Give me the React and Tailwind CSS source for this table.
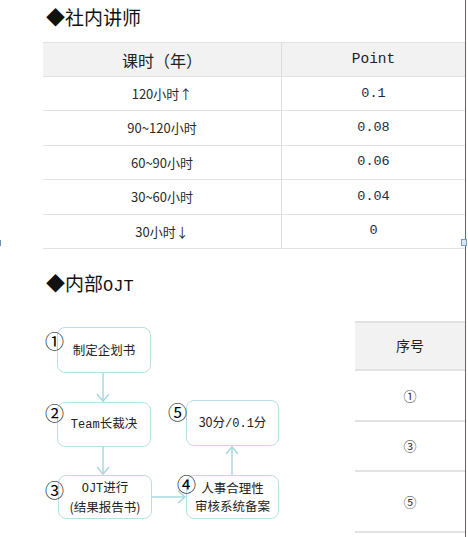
import React from "react";

const sans = { fontFamily: '"Noto Sans CJK SC", "Noto Sans", sans-serif' };
const mono = { fontFamily: '"Liberation Mono", monospace' };

const rows = [
  ["120小时↑", "0.1"],
  ["90~120小时", "0.08"],
  ["60~90小时", "0.06"],
  ["30~60小时", "0.04"],
  ["30小时↓", "0"],
];

function Node({ className, children }) {
  return (
    <div
      className={`absolute flex flex-col items-center justify-center rounded-[8px] border-[1.5px] border-[#b7dfe5] bg-white text-[12.5px] leading-[18px] text-[#222] ${className}`}
    >
      {children}
    </div>
  );
}

function Num({ className, children }) {
  return (
    <div className={`absolute text-[19px] leading-[19px] text-black ${className}`}>{children}</div>
  );
}

export default function App() {
  return (
    <div
      className="relative h-[537px] w-[468px] overflow-hidden bg-white text-[#222]"
      style={sans}
    >
      {/* Section 1 */}
      <div className="pl-[46px] pt-[5px] text-[19px] leading-[24px] text-[#111]">◆社内讲师</div>
      <div className="ml-[43px] mt-[13px] w-[422px]">
        <div className="flex h-[35px] border-y border-[#e2e2e2] bg-[#f2f2f2]">
          <div className="flex w-[239px] items-center justify-center border-r border-[#dedede] text-[16px] text-[#222]">
            课时（年）
          </div>
          <div className="flex flex-1 items-center justify-center text-[14.5px] text-[#222]" style={mono}>
            Point
          </div>
        </div>
        {rows.map(([a, b]) => (
          <div key={a} className="flex h-[34.4px] border-b border-[#e2e2e2]">
            <div className="flex w-[239px] items-center justify-center border-r border-[#dedede] text-[13px] text-[#2a2a2a]">
              {a}
            </div>
            <div className="flex flex-1 items-center justify-center text-[13.5px] text-[#1d2a47]" style={mono}>
              {b}
            </div>
          </div>
        ))}
      </div>

      {/* Section 2 */}
      <div className="mt-[22px] flex items-baseline pl-[46px] text-[19px] leading-[24px] text-[#111]">
        ◆内部<span style={mono} className="text-[17px]">OJT</span>
      </div>

      <div className="flex h-[242px]">
        {/* Flowchart canvas */}
        <div className="relative h-[242px] w-[355px]">
          <svg className="absolute left-0 top-0" width="355" height="242" fill="none" stroke="#a9d8df" strokeWidth="1.5">
            <path d="M103 74 V102" />
            <path d="M97 95 L103 102 L109 95" />
            <path d="M103 148 V175" />
            <path d="M97 168 L103 175 L109 168" />
            <path d="M152 198 H185" />
            <path d="M178 192 L185 198 L178 204" />
            <path d="M232 176 V148" />
            <path d="M226 155 L232 148 L238 155" />
          </svg>

          <Node className="left-[57px] top-[28px] h-[46px] w-[94px]">制定企划书</Node>
          <Node className="left-[57px] top-[103px] h-[45px] w-[94px]">
            <span>
              <span style={mono} className="text-[12px]">Team</span>长裁决
            </span>
          </Node>
          <Node className="left-[58px] top-[176px] h-[44px] w-[94px]">
            <span>
              <span style={mono} className="text-[12px]">OJT</span>进行
            </span>
            <span>(结果报告书)</span>
          </Node>
          <Node className="left-[186px] top-[176px] h-[44px] w-[93px]">
            <span>人事合理性</span>
            <span>审核系统备案</span>
          </Node>
          <Node className="left-[186px] top-[101px] h-[46px] w-[93px]">
            <span>
              30分<span style={mono} className="text-[12px]">/0.1</span>分
            </span>
          </Node>

          <Num className="left-[45px] top-[32px]">①</Num>
          <Num className="left-[45px] top-[104px]">②</Num>
          <Num className="left-[45px] top-[181px]">③</Num>
          <Num className="left-[177px] top-[175px]">④</Num>
          <Num className="left-[168px] top-[103px]">⑤</Num>
        </div>

        {/* Right table */}
        <div className="w-[110px] pt-[22px]">
          <div className="flex h-[50px] items-center justify-center border-y-2 border-[#e2e2e2] bg-[#f2f2f2] text-[14px] text-[#222]">
            序号
          </div>
          <div className="flex h-[51px] items-center justify-center border-b-2 border-[#e2e2e2] text-[13px] text-[#333]">①</div>
          <div className="flex h-[50px] items-center justify-center border-b-2 border-[#e2e2e2] text-[13px] text-[#333]">③</div>
          <div className="flex h-[61px] items-center justify-center border-b-2 border-[#e2e2e2] text-[13px] text-[#333]">⑤</div>
        </div>
      </div>

      {/* Overlays: selection line and handles */}
      <div className="absolute right-[2px] top-0 h-[537px] w-px bg-[#4d6a96]" />
      <div className="absolute left-0 top-[240px] h-[6px] w-px bg-[#6f8fc0]" />
      <div className="absolute left-[461px] top-[239px] h-[7px] w-[6px] border border-[#7a9cc8] bg-[#d4e6f5]" />
    </div>
  );
}
